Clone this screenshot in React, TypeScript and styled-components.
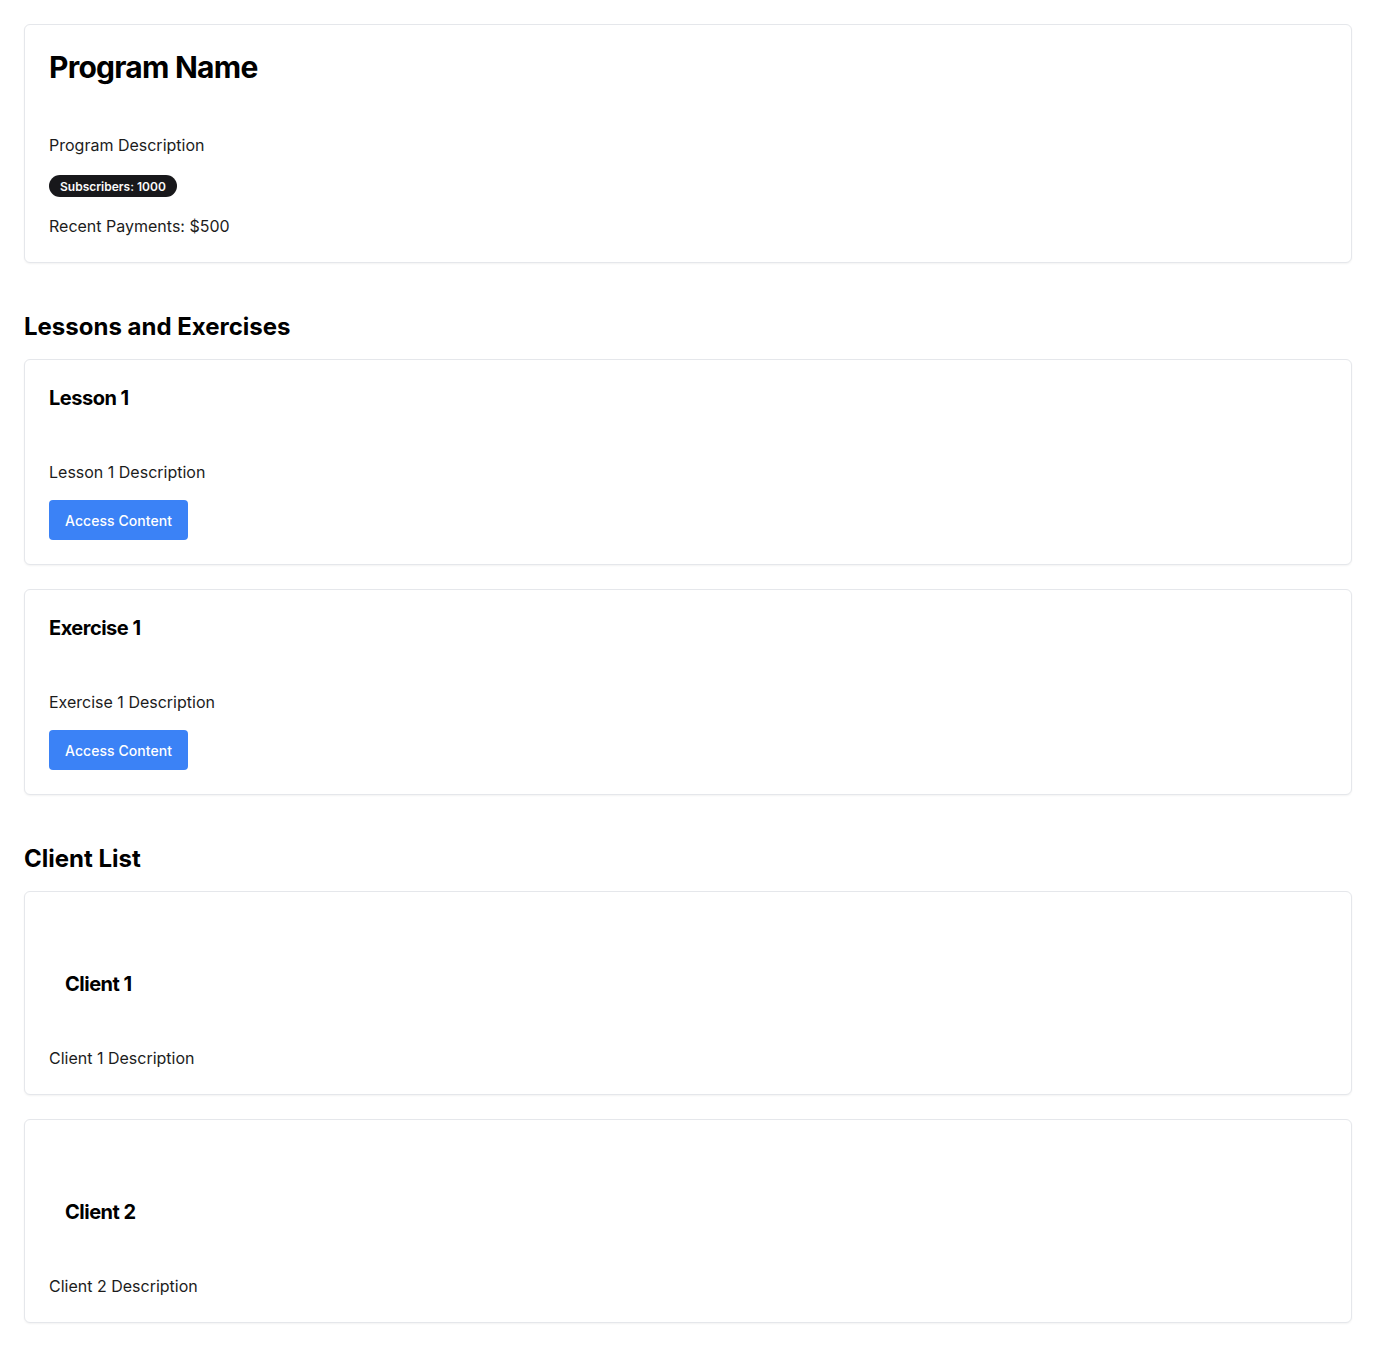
import React from 'react';
import styled, { createGlobalStyle } from 'styled-components';

const GlobalStyle = createGlobalStyle`
  * {
    box-sizing: border-box;
  }

  body {
    margin: 0;
    background: #ffffff;
    color: #0a0a0a;
    font-family: Inter, 'Noto Sans', sans-serif;
  }
`;

const Page = styled.div`
  padding: 24px;
`;

const Card = styled.div`
  border: 1px solid #e5e7eb;
  border-radius: 6px;
  background: #ffffff;
  box-shadow: 0 1px 2px rgba(0, 0, 0, 0.05);

  & + & {
    margin-top: 24px;
  }
`;

const CardHeader = styled.div<{ $tall?: boolean }>`
  display: flex;
  align-items: flex-end;
  padding: 24px;
  min-height: ${(p) => (p.$tall ? '130px' : 'auto')};
`;

const CardTitle = styled.h3<{ $size: 'lg' | 'md'; $indent?: boolean }>`
  margin: 0;
  padding-left: ${(p) => (p.$indent ? '16px' : '0')};
  font-size: ${(p) => (p.$size === 'lg' ? '30px' : '20px')};
  line-height: ${(p) => (p.$size === 'lg' ? '36px' : '28px')};
  font-weight: 700;
  letter-spacing: -0.025em;
  color: #000000;
`;

const CardContent = styled.div`
  display: flex;
  flex-direction: column;
  align-items: flex-start;
  gap: 16px;
  padding: 24px;
`;

const Text = styled.p`
  margin: 0;
  font-size: 16px;
  line-height: 24px;
  color: #1c1c1c;
`;

const BadgeRow = styled.div`
  height: 22px;
  display: flex;
  align-items: center;
  margin-top: 2px;
  margin-bottom: 1px;
`;

const Badge = styled.span`
  display: inline-flex;
  align-items: center;
  height: 22px;
  padding: 0 11px;
  border-radius: 999px;
  background: #18181b;
  color: #fafafa;
  font-size: 12px;
  font-weight: 600;
`;

const Button = styled.button`
  height: 40px;
  padding: 0 16px;
  border: none;
  border-radius: 4px;
  background: #3b82f6;
  color: #ffffff;
  font-family: Inter, 'Noto Sans', sans-serif;
  font-size: 14px;
  font-weight: 500;
  letter-spacing: 0.005em;
  cursor: pointer;
`;

const Section = styled.section`
  margin-top: 48px;
`;

const SectionTitle = styled.h2`
  margin: 0 0 16px;
  font-size: 24px;
  line-height: 32px;
  font-weight: 700;
  color: #000000;
`;

const items = [
  { title: 'Lesson 1', description: 'Lesson 1 Description' },
  { title: 'Exercise 1', description: 'Exercise 1 Description' },
];

const clients = [
  { name: 'Client 1', description: 'Client 1 Description' },
  { name: 'Client 2', description: 'Client 2 Description' },
];

const App: React.FC = () => {
  return (
    <>
      <GlobalStyle />
      <Page>
        <Card>
          <CardHeader>
            <CardTitle $size='lg'>Program Name</CardTitle>
          </CardHeader>
          <CardContent>
            <Text>Program Description</Text>
            <BadgeRow>
              <Badge>Subscribers: 1000</Badge>
            </BadgeRow>
            <Text>Recent Payments: $500</Text>
          </CardContent>
        </Card>

        <Section>
          <SectionTitle>Lessons and Exercises</SectionTitle>
          {items.map((item) => (
            <Card key={item.title}>
              <CardHeader>
                <CardTitle $size='md'>{item.title}</CardTitle>
              </CardHeader>
              <CardContent>
                <Text>{item.description}</Text>
                <Button>Access Content</Button>
              </CardContent>
            </Card>
          ))}
        </Section>

        <Section>
          <SectionTitle>Client List</SectionTitle>
          {clients.map((client) => (
            <Card key={client.name}>
              <CardHeader $tall>
                <CardTitle $size='md' $indent>
                  {client.name}
                </CardTitle>
              </CardHeader>
              <CardContent>
                <Text>{client.description}</Text>
              </CardContent>
            </Card>
          ))}
        </Section>
      </Page>
    </>
  );
};

export default App;
